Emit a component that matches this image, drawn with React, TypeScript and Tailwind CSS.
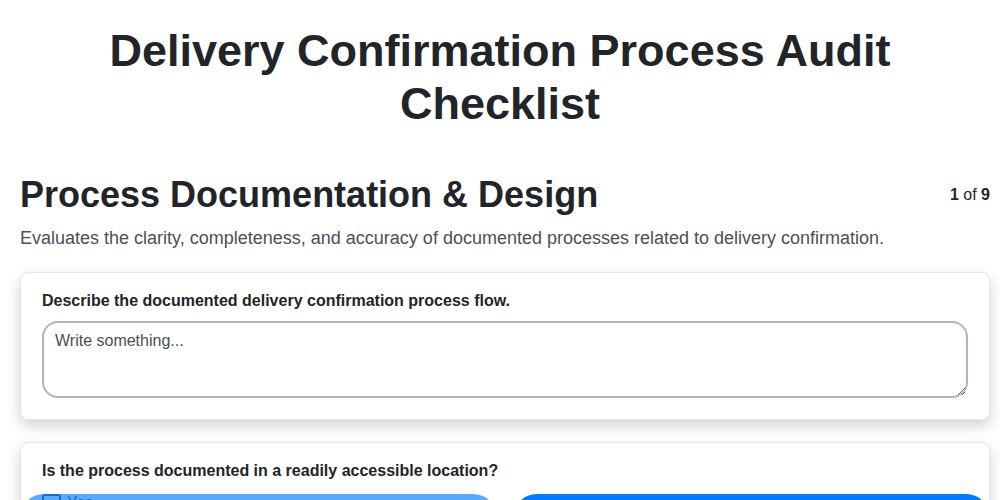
import React from "react";

export default function App() {
  return (
    <div className="fixed inset-0 overflow-hidden bg-white text-[#212529]" style={{ fontFamily: '"Liberation Sans", Arial, sans-serif' }}>
      <h1 className="pt-6 text-center text-[45px] leading-[53px] font-bold text-[#212529] px-[84px]">
        Delivery Confirmation Process Audit Checklist
      </h1>
      <div className="pl-5 pr-[10px]">
        <div className="mt-[43px] flex items-center justify-between">
          <h2 className="text-[36px] leading-[43px] font-bold">Process Documentation &amp; Design</h2>
          <div className="text-[16px]">
            <span className="font-bold">1</span> of <span className="font-bold">9</span>
          </div>
        </div>
        <p className="mt-[10px] text-[18px] leading-6 text-[#495057]">
          Evaluates the clarity, completeness, and accuracy of documented processes related to delivery confirmation.
        </p>

        <div className="mt-[22px] rounded-lg border border-[#e5e5ec] bg-white px-[21px] pt-[18px] pb-[21px] shadow-[0_6px_14px_rgba(0,0,0,0.18)]">
          <label className="block text-[16px] leading-5 font-bold">Describe the documented delivery confirmation process flow.</label>
          <textarea
            className="mt-[10px] block h-[77px] w-full resize-y rounded-2xl border-2 border-[#adb5bd] px-[11px] py-[8px] text-[16px] leading-5 text-[#212529] placeholder:text-[#495057] outline-none"
            placeholder="Write something..."
          />
        </div>

        <div className="mt-[22px] rounded-lg border border-[#e5e5ec] bg-white px-[21px] pt-[18px] pb-[21px] shadow-[0_6px_14px_rgba(0,0,0,0.18)]">
          <label className="block text-[16px] leading-5 font-bold">Is the process documented in a readily accessible location?</label>
          <label className="mt-[10px] flex items-center gap-[6px] text-[16px] text-[#495057]">
            <span className="inline-block h-[18px] w-[19px] rounded-[3px] border-2 border-[#495057] bg-white" />
            Yes
          </label>
          <label className="mt-2 flex items-center gap-[6px] text-[16px] text-[#495057]">
            <span className="inline-block h-[18px] w-[19px] rounded-[3px] border-2 border-[#495057] bg-white" />
            No
          </label>
        </div>
      </div>

      <div className="absolute left-0 right-0 top-[494px] flex gap-4 pl-5 pr-[10px]">
        <button className="flex-1 h-12 rounded-full bg-[#007bff] opacity-65 text-white text-[17px] font-bold">Previous</button>
        <button className="flex-1 h-12 rounded-full bg-[#007bff] text-white text-[17px] font-bold">Next</button>
      </div>
    </div>
  );
}
